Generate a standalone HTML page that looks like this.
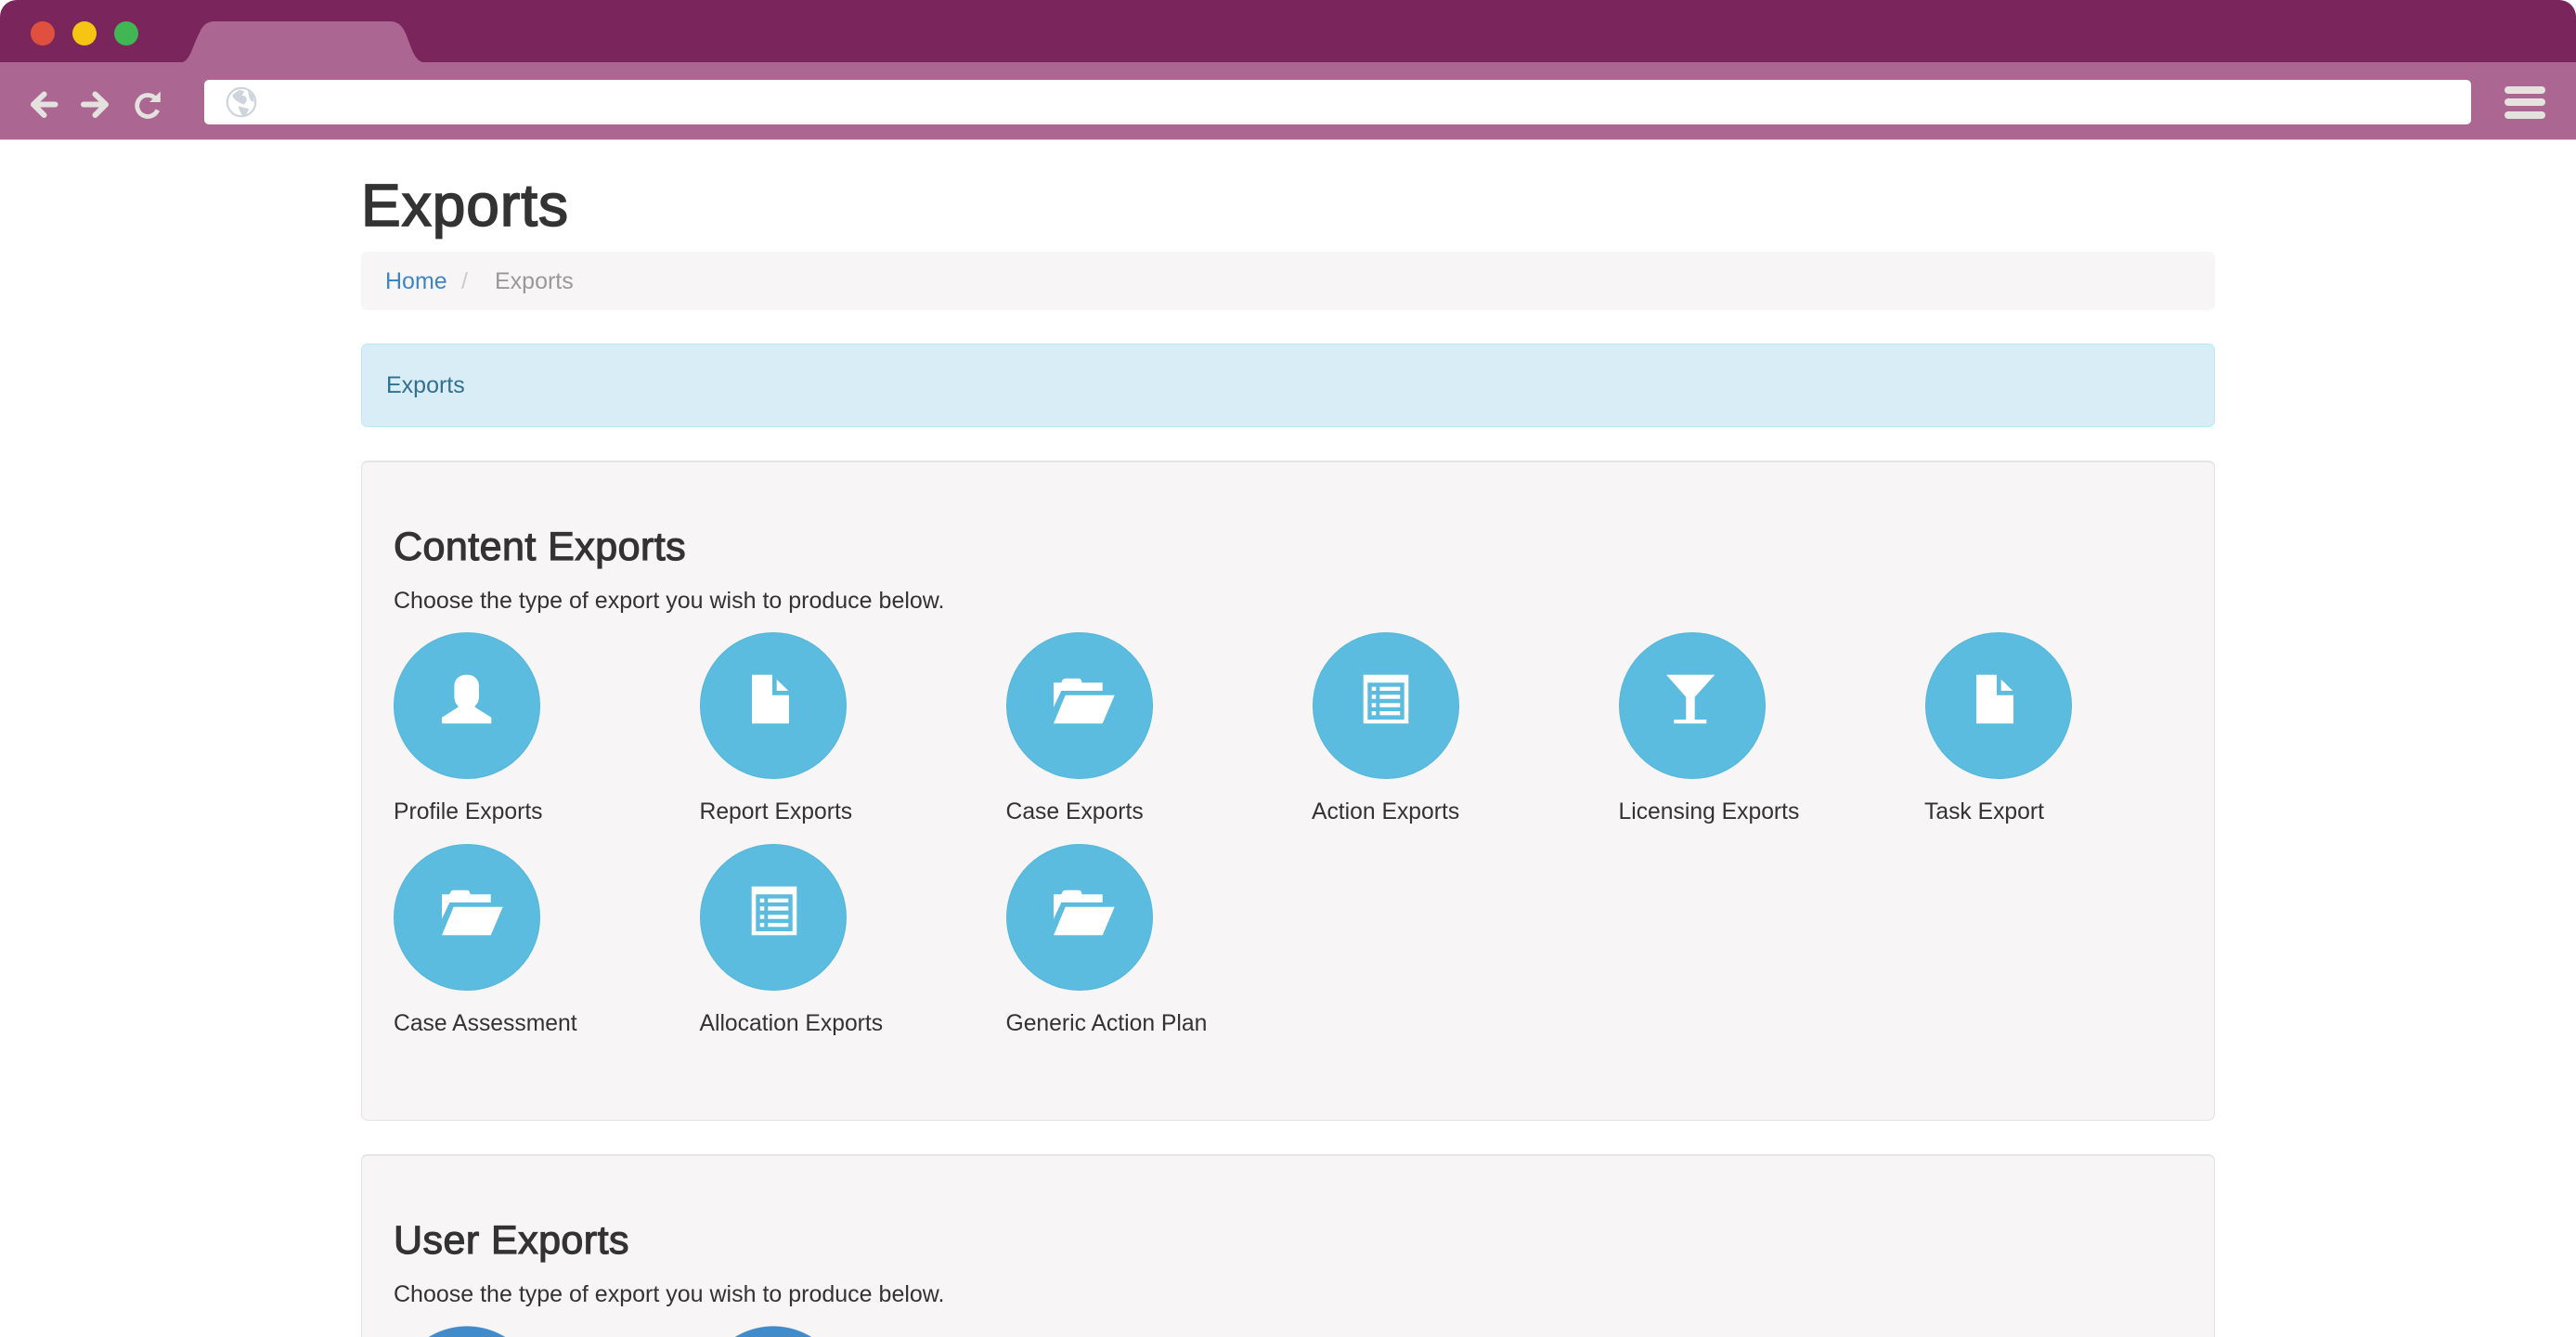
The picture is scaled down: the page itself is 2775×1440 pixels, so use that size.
<!DOCTYPE html>
<html lang="en">
<head>
<meta charset="utf-8">
<title>Exports</title>
<style>
html,body{margin:0;padding:0;background:#fff;width:2775px;height:1440px;overflow:hidden;}
#page{position:relative;width:2775px;height:1440px;overflow:hidden;contain:paint;font-family:"Liberation Sans",Arial,sans-serif;color:#333;}
.abs,h1,h2,p,a,span.t{position:absolute;margin:0;white-space:nowrap;}
.titlebar{left:0;top:0;width:2775px;height:67px;background:#7a265c;border-radius:18px 18px 0 0;}
.toolbar{left:0;top:67px;width:2775px;height:83px;background:#ab6791;border-bottom:1px solid #dcc3d3;}
.addr{left:220px;top:86px;width:2442px;height:48px;background:#fff;border-radius:5px;}
.light{width:26px;height:26px;border-radius:50%;top:23px;}
.bar{left:2698px;width:44px;height:8px;border-radius:4px;background:#e4e2df;}
h1{left:389px;top:188.5px;font-size:64px;line-height:64px;font-weight:400;-webkit-text-stroke:1.7px #333;letter-spacing:1px;color:#333;}
.crumb{left:389px;top:271px;width:1997px;height:63px;background:#f7f5f6;border-radius:7px;}
.body{font-size:25px;line-height:25px;}
.lab{font-size:24.7px;line-height:25px;}
.alert{left:389px;top:370px;width:1995px;height:88px;background:#d9edf7;border:1px solid #bce8f1;border-radius:7px;}
.well{left:389px;width:1995px;background:#f7f5f6;border:1px solid #e3e3e3;border-top:2px solid #e6e5e5;border-radius:7px;}
h2{left:424px;font-size:43px;line-height:43px;font-weight:400;-webkit-text-stroke:1.2px #333;letter-spacing:.45px;color:#333;}
.c{position:absolute;width:158px;height:158px;border-radius:50%;background:#5bbcdf;box-sizing:border-box;border:1.5px solid #54b6da;}
.c svg{position:absolute;left:-1.5px;top:-1.5px;width:158px;height:158px;}
.d{position:absolute;width:158px;height:12px;top:1428px;background:radial-gradient(circle 79px at 79px 79px,#428bca 99%,rgba(66,139,202,0) 100%);}
</style>
</head>
<body>
<div id="page">
<svg width="0" height="0" style="position:absolute">
<defs>
<symbol id="person" viewBox="0 0 158 158"><path fill="#fff" d="M78.700 45.700c-8.200 0-13.300 5-13.300 12.500v10.500c0 5 1.600 8.500 4 10.400v1.600L52 91.700v6.600h53.300v-6.600L87.700 80.700v-1.600c2.700-2 4.300-5.400 4.300-10.400V58.200c0-7.500-5.100-12.500-13.300-12.500z"/></symbol>
<symbol id="file" viewBox="0 0 158 158"><path fill="#fff" d="M56 45.700H78V67.700H96V98.300H56Z"/><path fill="#fff" d="M82.700 50.700V63H95.300Z"/></symbol>
<symbol id="folder" viewBox="0 0 158 158"><path fill="#fff" d="M52 54.300H60.300L61.500 51.500Q62.500 49.700 65 49.700H79Q81 49.700 81.700 51.500L82.700 54.300H104.700V63H60.300L52 80.700Z"/><path fill="#fff" d="M64.700 67.700H117.700L104.700 98.300H52Z"/></symbol>
<symbol id="list" viewBox="0 0 158 158"><path fill="#fff" fill-rule="evenodd" d="M55.700 45.700H104.300V98.300H55.700ZM60.300 54.300V94H99.700V54.300Z"/><g fill="#fff"><rect x="64.700" y="58.700" width="4.600" height="4.300"/><rect x="64.700" y="67.300" width="4.600" height="4.400"/><rect x="64.700" y="76.300" width="4.600" height="4.400"/><rect x="64.700" y="85" width="4.600" height="4.300"/><rect x="73.300" y="58.700" width="22" height="4.300"/><rect x="73.300" y="67.300" width="22" height="4.400"/><rect x="73.300" y="76.300" width="22" height="4.400"/><rect x="73.300" y="85" width="22" height="4.300"/></g></symbol>
<symbol id="glass" viewBox="0 0 158 158"><path fill="#fff" d="M52 45.700H104.300L82.700 69.700V94H95.300V98.300H60.300V94H73.300V69.700Z"/></symbol>
</defs>
</svg>

<div class="abs titlebar"></div>
<div class="abs toolbar"></div>
<svg class="abs" style="left:0;top:0" width="480" height="70"><path fill="#ab6791" d="M194 67.500C205 67 207 50 215 35C219 26 224 23 232 23H420C428 23 433 27 437 36C443 50 446 67 458 67.500Z"/></svg>
<div class="abs light" style="left:33px;background:#e0503f"></div>
<div class="abs light" style="left:78px;background:#f6c514"></div>
<div class="abs light" style="left:123px;background:#41b655"></div>

<svg class="abs" style="left:0;top:67px" width="220" height="83" viewBox="0 67 220 83">
<g fill="none" stroke="#e4e2df" stroke-width="6" stroke-linecap="round" stroke-linejoin="round">
<path d="M59.500 112.500H36.500M47.500 101.500L36 112.500L47.500 124"/>
<path d="M90 112.500H113.500M102.500 101.500L114 112.500L102.500 124"/>
<path d="M167 105.500A11.500 11.500 0 1 0 169.800 118.500" stroke-width="4.800" stroke-linecap="butt"/>
</g>
<path fill="#e4e2df" d="M161 110H172.800V98.500Z"/>
</svg>

<div class="abs addr"></div>
<svg class="abs" style="left:240px;top:90px" width="40" height="40" viewBox="240 90 40 40">
<circle cx="260" cy="110" r="15.200" fill="#fff" stroke="#cdd4dc" stroke-width="2.200"/>
<g fill="#cdd4dc">
<path d="M250.500 102L258 96.700L263.300 98.300L260.700 102.700L265 104L266 108.300L262.700 112.700L258.300 110.700L254 108L251 105Z"/>
<path d="M256.700 114.300L263.300 116L268.300 117.300L265 124L261.700 125L258.300 120Z"/>
<path d="M267 97.300L272.700 103.300L273.700 110L270 108.300L268 103.300Z"/>
</g>
</svg>
<div class="abs bar" style="top:92.500px"></div>
<div class="abs bar" style="top:106px"></div>
<div class="abs bar" style="top:119.500px"></div>

<h1>Exports</h1>

<div class="abs crumb"></div>
<a class="body" style="left:415px;top:290.500px;color:#3f85c6;text-decoration:none">Home</a>
<span class="t body" style="left:497px;top:290.500px;color:#ccc">/</span>
<span class="t body" style="left:533px;top:290.500px;color:#999">Exports</span>

<div class="abs alert"></div>
<span class="t body" style="left:416px;top:403px;color:#31708f">Exports</span>

<div class="abs well" style="top:496px;height:708px"></div>
<h2 style="top:567.600px">Content Exports</h2>
<p class="body" style="left:424px;top:634.500px">Choose the type of export you wish to produce below.</p>

<div class="c" style="left:424px;top:681px"><svg><use href="#person"/></svg></div>
<div class="c" style="left:754px;top:681px"><svg><use href="#file"/></svg></div>
<div class="c" style="left:1083.500px;top:681px"><svg><use href="#folder"/></svg></div>
<div class="c" style="left:1413.500px;top:681px"><svg><use href="#list"/></svg></div>
<div class="c" style="left:1743.500px;top:681px"><svg><use href="#glass"/></svg></div>
<div class="c" style="left:2073.500px;top:681px"><svg><use href="#file"/></svg></div>

<span class="t lab" style="left:424px;top:862px">Profile Exports</span>
<span class="t lab" style="left:753.500px;top:862px">Report Exports</span>
<span class="t lab" style="left:1083.500px;top:862px">Case Exports</span>
<span class="t lab" style="left:1413px;top:862px">Action Exports</span>
<span class="t lab" style="left:1743.500px;top:862px">Licensing Exports</span>
<span class="t lab" style="left:2073px;top:862px">Task Export</span>

<div class="c" style="left:424px;top:909px"><svg><use href="#folder"/></svg></div>
<div class="c" style="left:754px;top:909px"><svg><use href="#list"/></svg></div>
<div class="c" style="left:1083.500px;top:909px"><svg><use href="#folder"/></svg></div>

<span class="t lab" style="left:424px;top:1090.300px">Case Assessment</span>
<span class="t lab" style="left:753.500px;top:1090.300px">Allocation Exports</span>
<span class="t lab" style="left:1083.500px;top:1090.300px">Generic Action Plan</span>

<div class="abs well" style="top:1243px;height:195px;border-bottom:0;border-radius:7px 7px 0 0"></div>
<h2 style="top:1314.600px">User Exports</h2>
<p class="body" style="left:424px;top:1381.500px">Choose the type of export you wish to produce below.</p>
<div class="d" style="left:424px"></div>
<div class="d" style="left:754px"></div>
</div>
</body>
</html>
